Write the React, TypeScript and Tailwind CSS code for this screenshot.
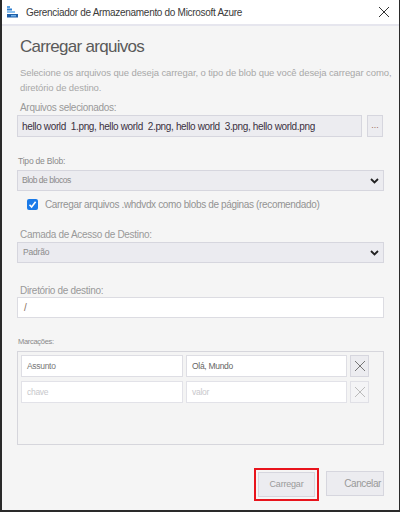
import React from "react";

const font = { fontFamily: '"Liberation Sans", Arial, sans-serif' };

function Chevron() {
  return (
    <svg width="9" height="6" viewBox="0 0 9 6" className="shrink-0">
      <path d="M1 1 L4.5 4.5 L8 1" fill="none" stroke="#222" strokeWidth="1.8" />
    </svg>
  );
}

function XIcon({ color, size = 12 }: { color: string; size?: number }) {
  return (
    <svg width={size} height={size} viewBox="0 0 12 12">
      <path d="M1 1 L11 11 M11 1 L1 11" stroke={color} strokeWidth="1" fill="none" />
    </svg>
  );
}

export default function App() {
  return (
    <div
      className="w-[400px] h-[512px] flex flex-col bg-[#f5f5f5] border-l-2 border-r border-b-2 border-[#2a2a2a] overflow-hidden"
      style={font}
    >
      {/* Title bar */}
      <div className="h-[24px] bg-white flex items-center shrink-0">
        <svg width="12" height="12" viewBox="0 0 12 12" className="ml-[5px]">
          <rect x="0" y="0" width="3" height="2" fill="#5aa0e0" />
          <rect x="0" y="2.5" width="5" height="2" fill="#2f7fd0" />
          <rect x="0" y="5" width="8" height="2" fill="#8cc0ee" />
          <rect x="0" y="8" width="11" height="3.5" fill="#1f5fa8" />
          <rect x="4" y="9" width="5" height="1.5" fill="#6fb0ea" />
        </svg>
        <span className="ml-[7px] text-[10px] text-[#3a3a3a] tracking-[-0.3px]">
          Gerenciador de Armazenamento do Microsoft Azure
        </span>
        <div className="ml-auto mr-[9px] flex items-center">
          <XIcon color="#333" size={12} />
        </div>
      </div>
      <div className="h-[2px] bg-[#e6e6ee] shrink-0" />

      {/* Body */}
      <div className="flex flex-col px-[15px]">
        <div className="mt-[9px] h-[24px] leading-[24px] pl-[3px] text-[17px] font-light text-[#5a5a5a] tracking-[-0.7px]">
          Carregar arquivos
        </div>
        <div className="mt-[6px] pl-[3px] text-[9.5px] leading-[15px] text-[#a8a8a8] whitespace-nowrap tracking-[-0.1px]">
          <div>Selecione os arquivos que deseja carregar, o tipo de blob que você deseja carregar como,</div>
          <div>diretório de destino.</div>
        </div>

        <div className="mt-[4px] h-[14px] leading-[18px] pl-[3px] text-[10px] text-[#999] tracking-[-0.3px]">
          Arquivos selecionados:
        </div>
        <div className="mt-[2px] flex gap-[5px]">
          <div className="h-[22px] w-[345px] bg-[#ececf0] border border-[#d6d6de] flex items-center pl-[4px] text-[10px] text-[#3a3040] whitespace-nowrap tracking-[-0.35px]">
            hello world&nbsp; 1.png, hello world&nbsp; 2.png, hello world&nbsp; 3.png, hello world.png
          </div>
          <div className="h-[22px] w-[16px] bg-[#ececf0] border border-[#d6d6de] flex items-center justify-center text-[9px] leading-none text-[#a07060] pb-[2px]">
            ...
          </div>
        </div>

        <div className="mt-[15px] h-[14px] leading-[18px] pl-[1px] text-[8.5px] text-[#8a8a8a] tracking-[-0.2px]">
          Tipo de Blob:
        </div>
        <div className="mt-[4px] h-[21px] bg-[#ececf0] border border-[#d6d6de] flex items-center pl-[4px] pr-[4px] text-[8.5px] text-[#8a8a8a] tracking-[-0.5px]">
          <span>Blob de blocos</span>
          <span className="ml-auto"><Chevron /></span>
        </div>

        <div className="mt-[6px] h-[14px] flex items-center pl-[10px]">
          <div className="w-[11px] h-[11px] rounded-[2px] bg-[#1a7ae8] flex items-center justify-center">
            <svg width="9" height="9" viewBox="0 0 9 9">
              <path d="M1.5 4.8 L3.6 7 L7.6 1.8" fill="none" stroke="white" strokeWidth="1.6" />
            </svg>
          </div>
          <span className="ml-[7px] text-[10px] text-[#939393] tracking-[-0.35px]">
            Carregar arquivos .whdvdx como blobs de páginas (recomendado)
          </span>
        </div>

        <div className="mt-[15px] h-[14px] leading-[18px] pl-[3px] text-[10px] text-[#999] tracking-[-0.3px]">
          Camada de Acesso de Destino:
        </div>
        <div className="mt-[2px] h-[21px] bg-[#ebebf0] border border-[#d6d6de] flex items-center pl-[5px] pr-[4px] text-[8.5px] text-[#8a8a8a] tracking-[-0.2px]">
          <span>Padrão</span>
          <span className="ml-auto"><Chevron /></span>
        </div>

        <div className="mt-[19px] h-[14px] leading-[18px] pl-[3px] text-[10px] text-[#999] tracking-[-0.3px]">
          Diretório de destino:
        </div>
        <div className="mt-[1px] h-[21px] bg-white border border-[#dcdce2] flex items-center pl-[6px] text-[10px] text-[#8a7060]">
          /
        </div>

        <div className="mt-[15px] h-[14px] leading-[18px] pl-[1px] text-[7.5px] text-[#8a8a8a] tracking-[-0.3px]">
          Marcações:
        </div>
        <div className="mt-[4px] h-[94px] border border-[#d6d6dc] bg-[#f4f4f4] pt-[3px] pl-[3px] flex flex-col gap-[4px]">
          <div className="flex gap-[3px]">
            <div className="h-[22px] w-[162px] bg-white border border-[#dedee4] flex items-center pl-[5px] text-[8.5px] text-[#777] tracking-[-0.3px]">
              Assunto
            </div>
            <div className="h-[22px] w-[161px] bg-white border border-[#dedee4] flex items-center pl-[5px] text-[8.5px] text-[#666] tracking-[-0.3px]">
              Olá, Mundo
            </div>
            <div className="h-[22px] w-[19px] bg-[#ececf0] border border-[#d6d6de] flex items-center justify-center">
              <XIcon color="#777" size={12} />
            </div>
          </div>
          <div className="flex gap-[3px]">
            <div className="h-[22px] w-[162px] bg-white border border-[#e2e2e8] flex items-center pl-[5px] text-[8.5px] text-[#c8c8cc] tracking-[-0.3px]">
              chave
            </div>
            <div className="h-[22px] w-[161px] bg-white border border-[#e2e2e8] flex items-center pl-[5px] text-[8.5px] text-[#c8c8cc] tracking-[-0.3px]">
              valor
            </div>
            <div className="h-[22px] w-[19px] bg-[#f4f4f6] border border-[#e0e0e6] flex items-center justify-center">
              <XIcon color="#bbb" size={12} />
            </div>
          </div>
        </div>

        <div className="mt-[23px] flex justify-end gap-[7px]">
          <div className="border-2 border-[#e8141c] p-[2px] bg-[#f5f5f5]">
            <div className="h-[25px] w-[57px] bg-[#ececf0] border border-[#d6d6de] flex items-center justify-center text-[9px] text-[#9a9a9a] tracking-[-0.2px]">
              Carregar
            </div>
          </div>
          <div className="mt-[3px] h-[25px] w-[58px] bg-[#ececf0] border border-[#d6d6de] flex items-center justify-end pr-[2px] text-[10px] text-[#999] tracking-[-0.4px]">
            Cancelar
          </div>
        </div>
      </div>
    </div>
  );
}
